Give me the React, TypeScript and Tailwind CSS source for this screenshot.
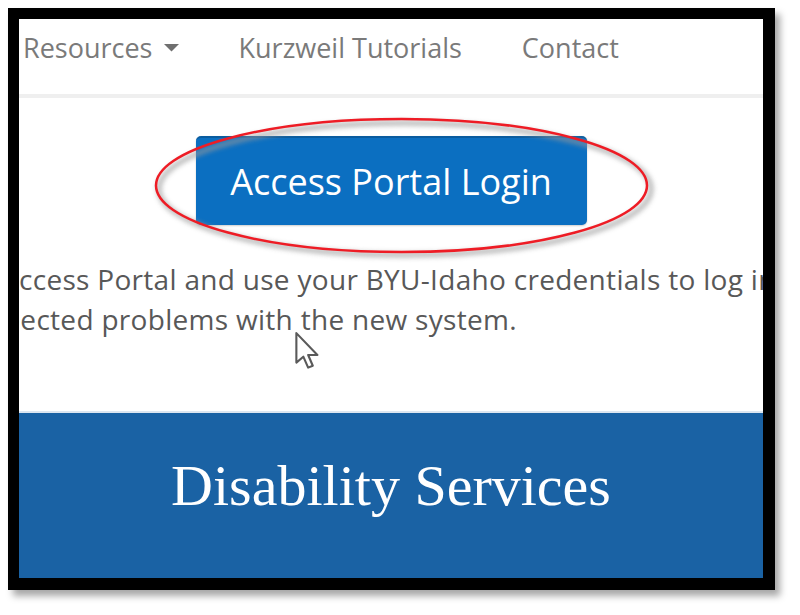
import { ReactNode } from "react";

const NavItem = ({ children, caret }: { children: ReactNode; caret?: boolean }) => (
  <span className="flex items-center gap-[11px] text-[#7a7a7a]">
    {children}
    {caret && (
      <svg width="15" height="8" viewBox="0 0 15 8">
        <path d="M0 0 L15 0 L7.5 7.5 Z" fill="#6f6f6f" />
      </svg>
    )}
  </span>
);

const Cursor = () => (
  <svg
    className="absolute left-[275px] top-[312px]"
    width="30"
    height="40"
    viewBox="0 0 14 19"
  >
    <path
      d="M1 1 L1 15 L4.3 12.2 L6.6 17.4 L8.8 16.5 L6.6 11.4 L11 11.4 Z"
      fill="#ffffff"
      stroke="#5a5a5a"
      strokeWidth="1"
      strokeLinejoin="round"
    />
  </svg>
);

const Highlight = () => (
  <svg className="absolute left-0 top-0" width="744" height="559">
    <defs>
      <filter id="soft" x="-10%" y="-30%" width="120%" height="160%">
        <feGaussianBlur stdDeviation="2.5" />
      </filter>
    </defs>
    <ellipse
      cx="386"
      cy="170"
      rx="246"
      ry="66"
      fill="none"
      stroke="#9a9a9a"
      strokeWidth="5"
      filter="url(#soft)"
      opacity="0.7"
    />
    <ellipse cx="382.5" cy="166.5" rx="245.5" ry="66.5" fill="none" stroke="#ee1c25" strokeWidth="2.5" />
  </svg>
);

export default function App() {
  return (
    <div className="w-[800px] h-[615px] bg-white pl-[8px] pt-[8px]">
      <div className="w-[767px] h-[582px] border-black border-l-[11px] border-t-[11px] border-r-[12px] border-b-[12px] shadow-[5px_6px_7px_rgba(0,0,0,0.35)]">
        <div className="relative w-[744px] h-[559px] overflow-hidden bg-white flex flex-col font-['Open_Sans',sans-serif]">
          <nav className="h-[79px] shrink-0 border-b-4 border-[#efefef] flex items-start pt-[9px] pl-[4px] text-[27px]">
            <NavItem caret>Resources</NavItem>
            <span className="ml-[60px]">
              <NavItem>Kurzweil Tutorials</NavItem>
            </span>
            <span className="ml-[60px]">
              <NavItem>Contact</NavItem>
            </span>
          </nav>

          <section className="h-[315px] shrink-0 flex flex-col items-center pt-[38px] border-b-2 border-[#dce6f0]">
            <button className="w-[391px] h-[89px] rounded-[5px] bg-[#0b6fc1] border-t-2 border-[#0a5c9f] text-white text-[36px] shadow-[0_1px_2px_rgba(0,0,0,0.2)]">
              Access Portal Login
            </button>
            <div className="self-stretch mt-[34px] text-[28px] leading-[40px] tracking-[0.3px] text-[#585858] whitespace-nowrap">
              <p className="ml-[-18px]">Access Portal and use your BYU-Idaho credentials to log in</p>
              <p className="ml-[-82px]">unexpected problems with the new system.</p>
            </div>
          </section>

          <section className="flex-1 bg-[#1a62a4] flex justify-center pt-[33px]">
            <h1 className="text-white text-[58px] leading-[80px] font-['Liberation_Serif',serif]">
              Disability Services
            </h1>
          </section>

          <Highlight />
          <Cursor />
        </div>
      </div>
    </div>
  );
}
